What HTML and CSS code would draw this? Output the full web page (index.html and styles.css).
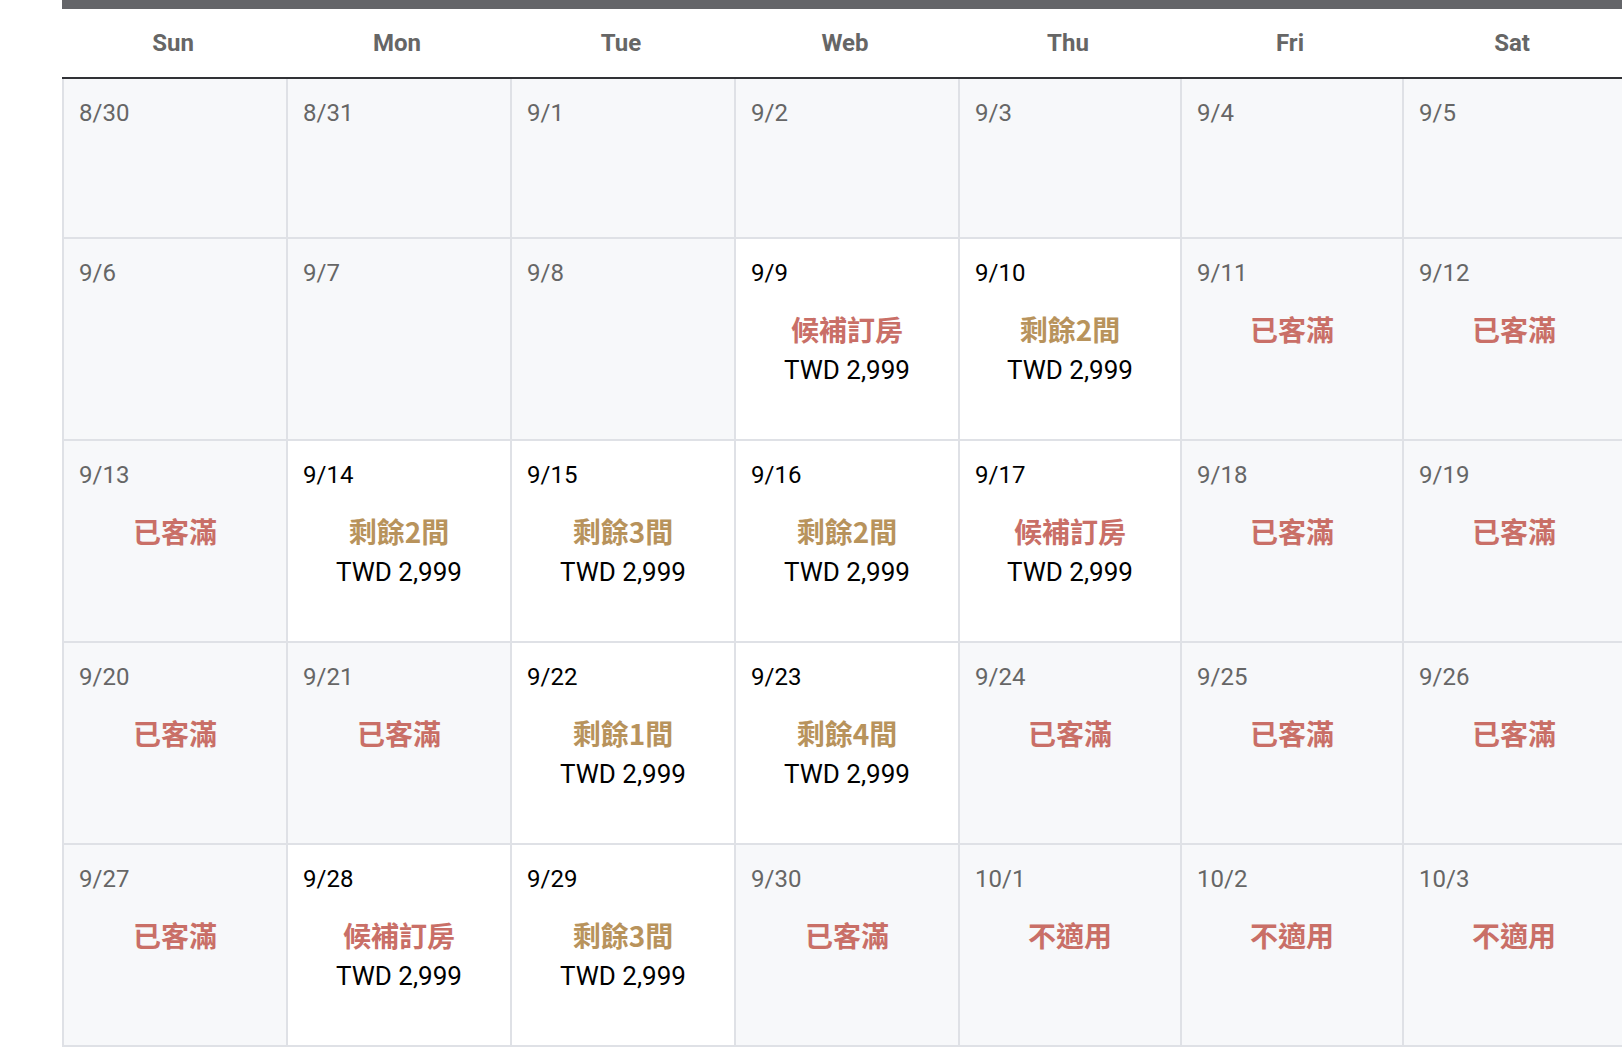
FILE: index.html
```html
<!DOCTYPE html>
<html lang="zh-Hant">
<head>
<meta charset="utf-8">
<title>Calendar</title>
<link rel="stylesheet" href="styles.css">
</head>
<body>
<div class="calendar">
  <div class="weekdays">
    <div class="wd">Sun</div>
    <div class="wd">Mon</div>
    <div class="wd">Tue</div>
    <div class="wd">Web</div>
    <div class="wd">Thu</div>
    <div class="wd">Fri</div>
    <div class="wd">Sat</div>
  </div>
  <div class="days">
    <div class="day off"><div class="date">8/30</div></div>
    <div class="day off"><div class="date">8/31</div></div>
    <div class="day off"><div class="date">9/1</div></div>
    <div class="day off"><div class="date">9/2</div></div>
    <div class="day off"><div class="date">9/3</div></div>
    <div class="day off"><div class="date">9/4</div></div>
    <div class="day off"><div class="date">9/5</div></div>

    <div class="day off"><div class="date">9/6</div></div>
    <div class="day off"><div class="date">9/7</div></div>
    <div class="day off"><div class="date">9/8</div></div>
    <div class="day"><div class="date">9/9</div><div class="status red">候補訂房</div><div class="price">TWD 2,999</div></div>
    <div class="day"><div class="date">9/10</div><div class="status gold">剩餘2間</div><div class="price">TWD 2,999</div></div>
    <div class="day off"><div class="date">9/11</div><div class="status red">已客滿</div></div>
    <div class="day off"><div class="date">9/12</div><div class="status red">已客滿</div></div>

    <div class="day off"><div class="date">9/13</div><div class="status red">已客滿</div></div>
    <div class="day"><div class="date">9/14</div><div class="status gold">剩餘2間</div><div class="price">TWD 2,999</div></div>
    <div class="day"><div class="date">9/15</div><div class="status gold">剩餘3間</div><div class="price">TWD 2,999</div></div>
    <div class="day"><div class="date">9/16</div><div class="status gold">剩餘2間</div><div class="price">TWD 2,999</div></div>
    <div class="day"><div class="date">9/17</div><div class="status red">候補訂房</div><div class="price">TWD 2,999</div></div>
    <div class="day off"><div class="date">9/18</div><div class="status red">已客滿</div></div>
    <div class="day off"><div class="date">9/19</div><div class="status red">已客滿</div></div>

    <div class="day off"><div class="date">9/20</div><div class="status red">已客滿</div></div>
    <div class="day off"><div class="date">9/21</div><div class="status red">已客滿</div></div>
    <div class="day"><div class="date">9/22</div><div class="status gold">剩餘1間</div><div class="price">TWD 2,999</div></div>
    <div class="day"><div class="date">9/23</div><div class="status gold">剩餘4間</div><div class="price">TWD 2,999</div></div>
    <div class="day off"><div class="date">9/24</div><div class="status red">已客滿</div></div>
    <div class="day off"><div class="date">9/25</div><div class="status red">已客滿</div></div>
    <div class="day off"><div class="date">9/26</div><div class="status red">已客滿</div></div>

    <div class="day off"><div class="date">9/27</div><div class="status red">已客滿</div></div>
    <div class="day"><div class="date">9/28</div><div class="status red">候補訂房</div><div class="price">TWD 2,999</div></div>
    <div class="day"><div class="date">9/29</div><div class="status gold">剩餘3間</div><div class="price">TWD 2,999</div></div>
    <div class="day off"><div class="date">9/30</div><div class="status red">已客滿</div></div>
    <div class="day off"><div class="date">10/1</div><div class="status red">不適用</div></div>
    <div class="day off"><div class="date">10/2</div><div class="status red">不適用</div></div>
    <div class="day off"><div class="date">10/3</div><div class="status red">不適用</div></div>
  </div>
</div>
</body>
</html>
```

FILE: styles.css
```css
html, body {
  margin: 0;
  padding: 0;
  background: #ffffff;
  overflow: hidden;
}

body {
  font-family: Roboto, "Noto Sans CJK TC", sans-serif;
  color: #000;
}

.calendar {
  margin-left: 62px;
  width: 1564px;
}

.weekdays {
  display: grid;
  grid-template-columns: 222px 222px 222px 222px 220px 220px 220px;
  column-gap: 2px;
  border-top: 9px solid #646569;
  border-bottom: 2px solid #313236;
  height: 68px;
  align-items: center;
}

.wd {
  text-align: center;
  font-size: 24px;
  font-weight: 700;
  color: #666666;
  line-height: 28px;
}

.days {
  display: grid;
  grid-template-columns: 222px 222px 222px 222px 220px 220px 220px;
  grid-template-rows: 158px repeat(4, 200px);
  gap: 2px;
  background: #dfe1e6;
  padding: 0 0 2px 2px;
}

.day {
  background: #ffffff;
  padding: 16px 15px;
  display: flex;
  flex-direction: column;
  align-items: stretch;
}

.day.off {
  background: #f7f8fa;
}

.date {
  font-size: 24px;
  line-height: 36px;
  color: #000000;
}

.day.off .date {
  color: #666666;
}

.status {
  font-family: "Noto Sans CJK TC", sans-serif;
  font-size: 28px;
  font-weight: 700;
  line-height: 42px;
  text-align: center;
  margin-top: 17px;
}

.status.red {
  color: #c96f67;
}

.status.gold {
  color: #b8935c;
}

.price {
  font-size: 26px;
  line-height: 39px;
  text-align: center;
  margin-top: 1px;
  color: #000000;
}
```
